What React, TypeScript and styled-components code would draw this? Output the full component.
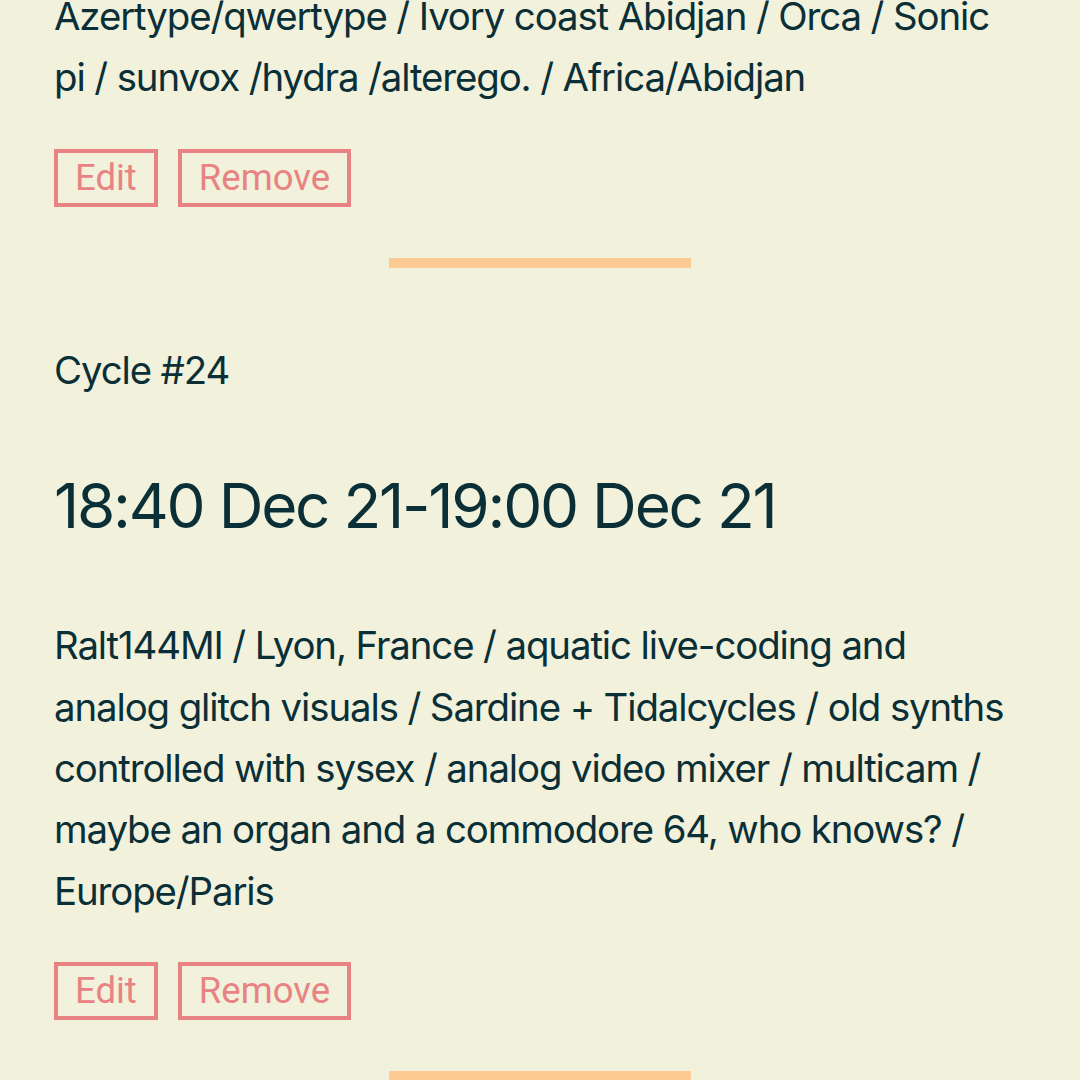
import React from "react";
import styled, { createGlobalStyle } from "styled-components";

const Global = createGlobalStyle`
  html, body { margin: 0; padding: 0; background: #f1f1dc; }
  body { font-family: Inter, "Noto Sans", sans-serif; color: #0b2f36; overflow: hidden; }
`;

const Page = styled.main`
  padding: 0 54px;
  margin-top: -14px;
  font-size: 38.4px;
  line-height: 1.6;
  letter-spacing: -0.029em;
`;

const Entry = styled.section`
  display: flex;
  flex-direction: column;
`;

const CycleLabel = styled.p`
  margin: 72px 0 0;
`;

const TimeRange = styled.h2`
  margin: 62px 0 0;
  font-size: 62px;
  font-weight: 400;
  line-height: 1.4;
  letter-spacing: -0.036em;
`;

const Description = styled.p<{ $first?: boolean }>`
  margin: ${(p) => (p.$first ? "0" : "65px")} 0 0;
`;

const Actions = styled.div`
  display: flex;
  gap: 20px;
  margin-top: 40px;
`;

const ActionButton = styled.button`
  font-family: Roboto, "Liberation Sans", sans-serif;
  font-size: 36.5px;
  letter-spacing: 0;
  line-height: 1;
  height: 58px;
  padding: 0 17px;
  background: transparent;
  color: #e98282;
  border: 4px solid #e98282;
  border-radius: 0;
`;

const Divider = styled.hr`
  width: 302px;
  height: 10px;
  margin: 51px auto 0;
  border: none;
  background: #fcca93;
`;

type Item = { cycle?: string; time?: string; text: string };

const items: Item[] = [
  {
    text:
      "Azertype/qwertype / Ivory coast Abidjan / Orca / Sonic pi / sunvox /hydra /alterego. / Africa/Abidjan",
  },
  {
    cycle: "Cycle #24",
    time: "18:40 Dec 21-19:00 Dec 21",
    text:
      "Ralt144MI / Lyon, France / aquatic live-coding and analog glitch visuals / Sardine + Tidalcycles / old synths controlled with sysex / analog video mixer / multicam / maybe an organ and a commodore 64, who knows? / Europe/Paris",
  },
];

export default function App() {
  return (
    <>
      <Global />
      <Page>
        {items.map((it, i) => (
          <Entry key={i}>
            {it.cycle && <CycleLabel>{it.cycle}</CycleLabel>}
            {it.time && <TimeRange>{it.time}</TimeRange>}
            <Description $first={!it.cycle}>{it.text}</Description>
            <Actions>
              <ActionButton>Edit</ActionButton>
              <ActionButton>Remove</ActionButton>
            </Actions>
            <Divider />
          </Entry>
        ))}
      </Page>
    </>
  );
}
